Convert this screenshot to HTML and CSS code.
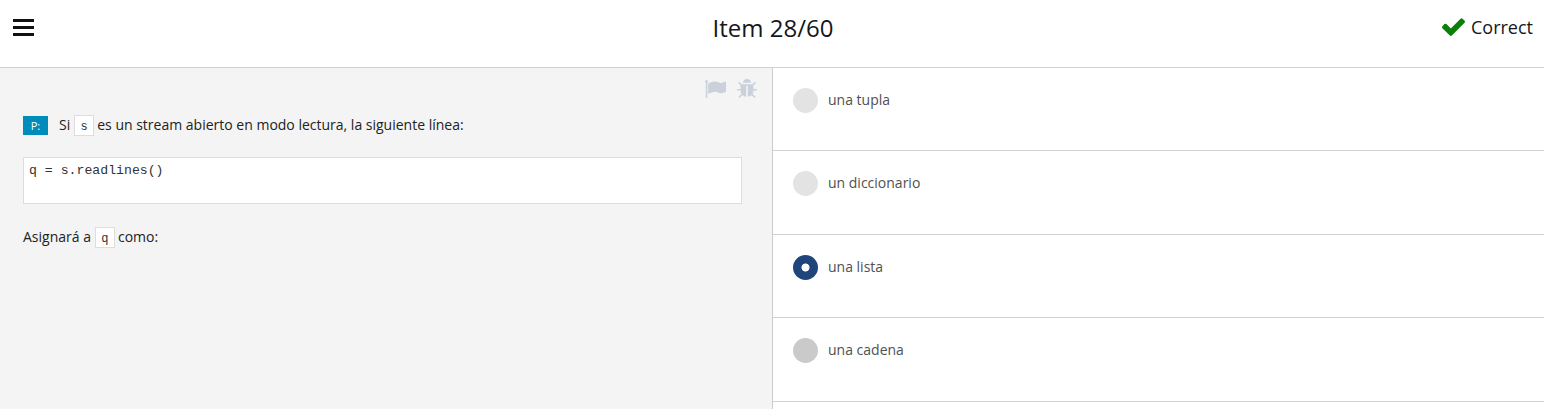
FILE: index.html
```html
<!DOCTYPE html>
<html lang="es">
<head>
<meta charset="utf-8">
<title>Item 28/60</title>
<link rel="stylesheet" href="styles.css">
</head>
<body>
<header class="topbar">
  <div class="side">
    <svg class="menu" viewBox="0 0 21 17"><path d="M0 0h21v3H0zM0 7h21v3H0zM0 14h21v3H0z"/></svg>
  </div>
  <h1 class="title">Item 28/60</h1>
  <div class="side status">
    <svg class="check" viewBox="121 314 1550 1208" preserveAspectRatio="none"><path d="M1671 566q0 40-28 68l-724 724-136 136q-28 28-68 28t-68-28l-136-136-362-362q-28-28-28-68t28-68l136-136q28-28 68-28t68 28l294 295 656-657q28-28 68-28t68 28l136 136q28 28 28 68z"/></svg>
    <span>Correct</span>
  </div>
</header>
<main class="content">
  <section class="question">
    <div class="tools">
      <svg class="flag" viewBox="64 128 1728 1536" preserveAspectRatio="none"><path d="M320 256q0 72-64 110v1266q0 13-9.500 22.500t-22.500 9.500h-64q-13 0-22.500-9.500t-9.500-22.500v-1266q-64-38-64-110 0-53 37.500-90.500t90.500-37.500 90.500 37.500 37.500 90.500zm1472 64v763q0 25-12.500 38.500t-39.500 27.500q-215 116-369 116-61 0-123.500-22t-108.500-48-115.500-48-142.500-22q-192 0-464 146-17 9-33 9-26 0-45-19t-19-45v-742q0-32 31-55 21-14 79-43 236-120 421-120 107 0 200 29t219 88q38 19 88 19 54 0 117.500-21t110-47 88-47 54.500-21q26 0 45 19t19 45z"/></svg>
      <svg class="bug" viewBox="96 64 1600 1592" preserveAspectRatio="none"><path d="M1696 960q0 26-19 45t-45 19h-224q0 171-67 290l208 209q19 19 19 45t-19 45q-18 19-45 19t-45-19l-198-197q-5 5-15 13t-42 28.500-65 36.500-82 29-97 13v-896h-128v896q-51 0-101.500-13.500t-87-33-66-39-43.500-32.500l-15-14-183 207q-20 21-48 21-24 0-43-16-19-18-20.500-44.500t15.500-46.500l202-227q-58-114-58-274h-224q-26 0-45-19t-19-45 19-45 45-19h224v-294l-173-173q-19-19-19-45t19-45 45-19 45 19l173 173h844l173-173q19-19 45-19t45 19 19 45-19 45l-173 173v294h224q26 0 45 19t19 45zm-480-576h-640q0-133 93.500-226.500t226.500-93.500 226.500 93.500 93.500 226.500z"/></svg>
    </div>
    <p class="prompt"><span class="label">P:</span><span>Si</span><code class="chip">s</code><span>es un stream abierto en modo lectura, la siguiente línea:</span></p>
    <pre class="code">q = s.readlines()</pre>
    <p class="prompt"><span>Asignará a</span><code class="chip">q</code><span>como:</span></p>
  </section>
  <ul class="answers">
    <li class="answer"><span class="radio"></span>una tupla</li>
    <li class="answer"><span class="radio"></span>un diccionario</li>
    <li class="answer"><span class="radio selected"></span>una lista</li>
    <li class="answer"><span class="radio hover"></span>una cadena</li>
  </ul>
</main>
</body>
</html>
```
FILE: styles.css
```css
* { box-sizing: border-box; }
body {
  margin: 0;
  height: 409px;
  overflow: hidden;
  display: flex;
  flex-direction: column;
  background: #fff;
  color: #29303b;
  font: 14px/21px "Open Sans", sans-serif;
}
svg { display: block; }
.topbar {
  flex: none;
  height: 68px;
  border-bottom: 1px solid #d0d2d3;
  display: flex;
  padding: 0 11px 0 13px;
  color: #14171c;
}
.side { flex: 1; padding-top: 19px; }
.menu { width: 21px; height: 17px; fill: #111; }
.title { margin: 0; padding-top: 10px; font-size: 24px; line-height: 36px; font-weight: 400; }
.status {
  display: flex;
  justify-content: flex-end;
  gap: 6px;
  padding-top: 14px;
  font-size: 18px;
  line-height: 27px;
}
.check { width: 23px; height: 18px; margin-top: 4px; fill: #0a800a; }
.content { flex: 1; display: flex; }
.question {
  width: 773px;
  border-right: 1px solid #ccc;
  padding: 11px 30px 0 23px;
  background: #f4f4f4;
}
.tools {
  display: flex;
  justify-content: flex-end;
  gap: 11px;
  height: 20px;
  margin-right: -15px;
}
.flag { width: 21px; height: 18px; margin-top: 1px; fill: #cad1da; }
.bug { width: 20px; height: 19px; fill: #cad1da; }
.prompt { display: flex; align-items: center; height: 21px; margin: 15px 0 0; color: #222; }
.label {
  width: 25px;
  height: 19px;
  margin: 1px 11px 0 0;
  background: #008cba;
  color: #fff;
  font-size: 11px;
  line-height: 19px;
  text-align: center;
}
.chip {
  width: 20px;
  height: 21px;
  margin: 1px 3px 0 4px;
  border: 1px solid #ddd;
  background: #fff;
  color: #333;
  font: 12px/22px "Liberation Mono", monospace;
  text-align: center;
}
.code {
  height: 47px;
  margin: 22px 0 22px;
  padding: 3px 5px;
  border: 1px solid #ddd;
  background: #fff;
  color: #333;
  font: 13.200px/20px "Liberation Mono", monospace;
}
.answers { flex: 1; margin: 0; padding: 0; list-style: none; }
.answer {
  display: flex;
  gap: 10px;
  height: 84px;
  padding: 21px 20px 0;
  border-bottom: 1px solid #d3d3d3;
  color: #505050;
}
.answer:nth-child(odd) { height: 83px; }
.radio {
  width: 25px;
  height: 25px;
  margin-top: -1px;
  border-radius: 50%;
  background: #e3e3e3;
}
.radio.selected { background: radial-gradient(circle, #fff 3.600px, #20457a 4.400px); }
.radio.hover { background: #cacaca; }
```
